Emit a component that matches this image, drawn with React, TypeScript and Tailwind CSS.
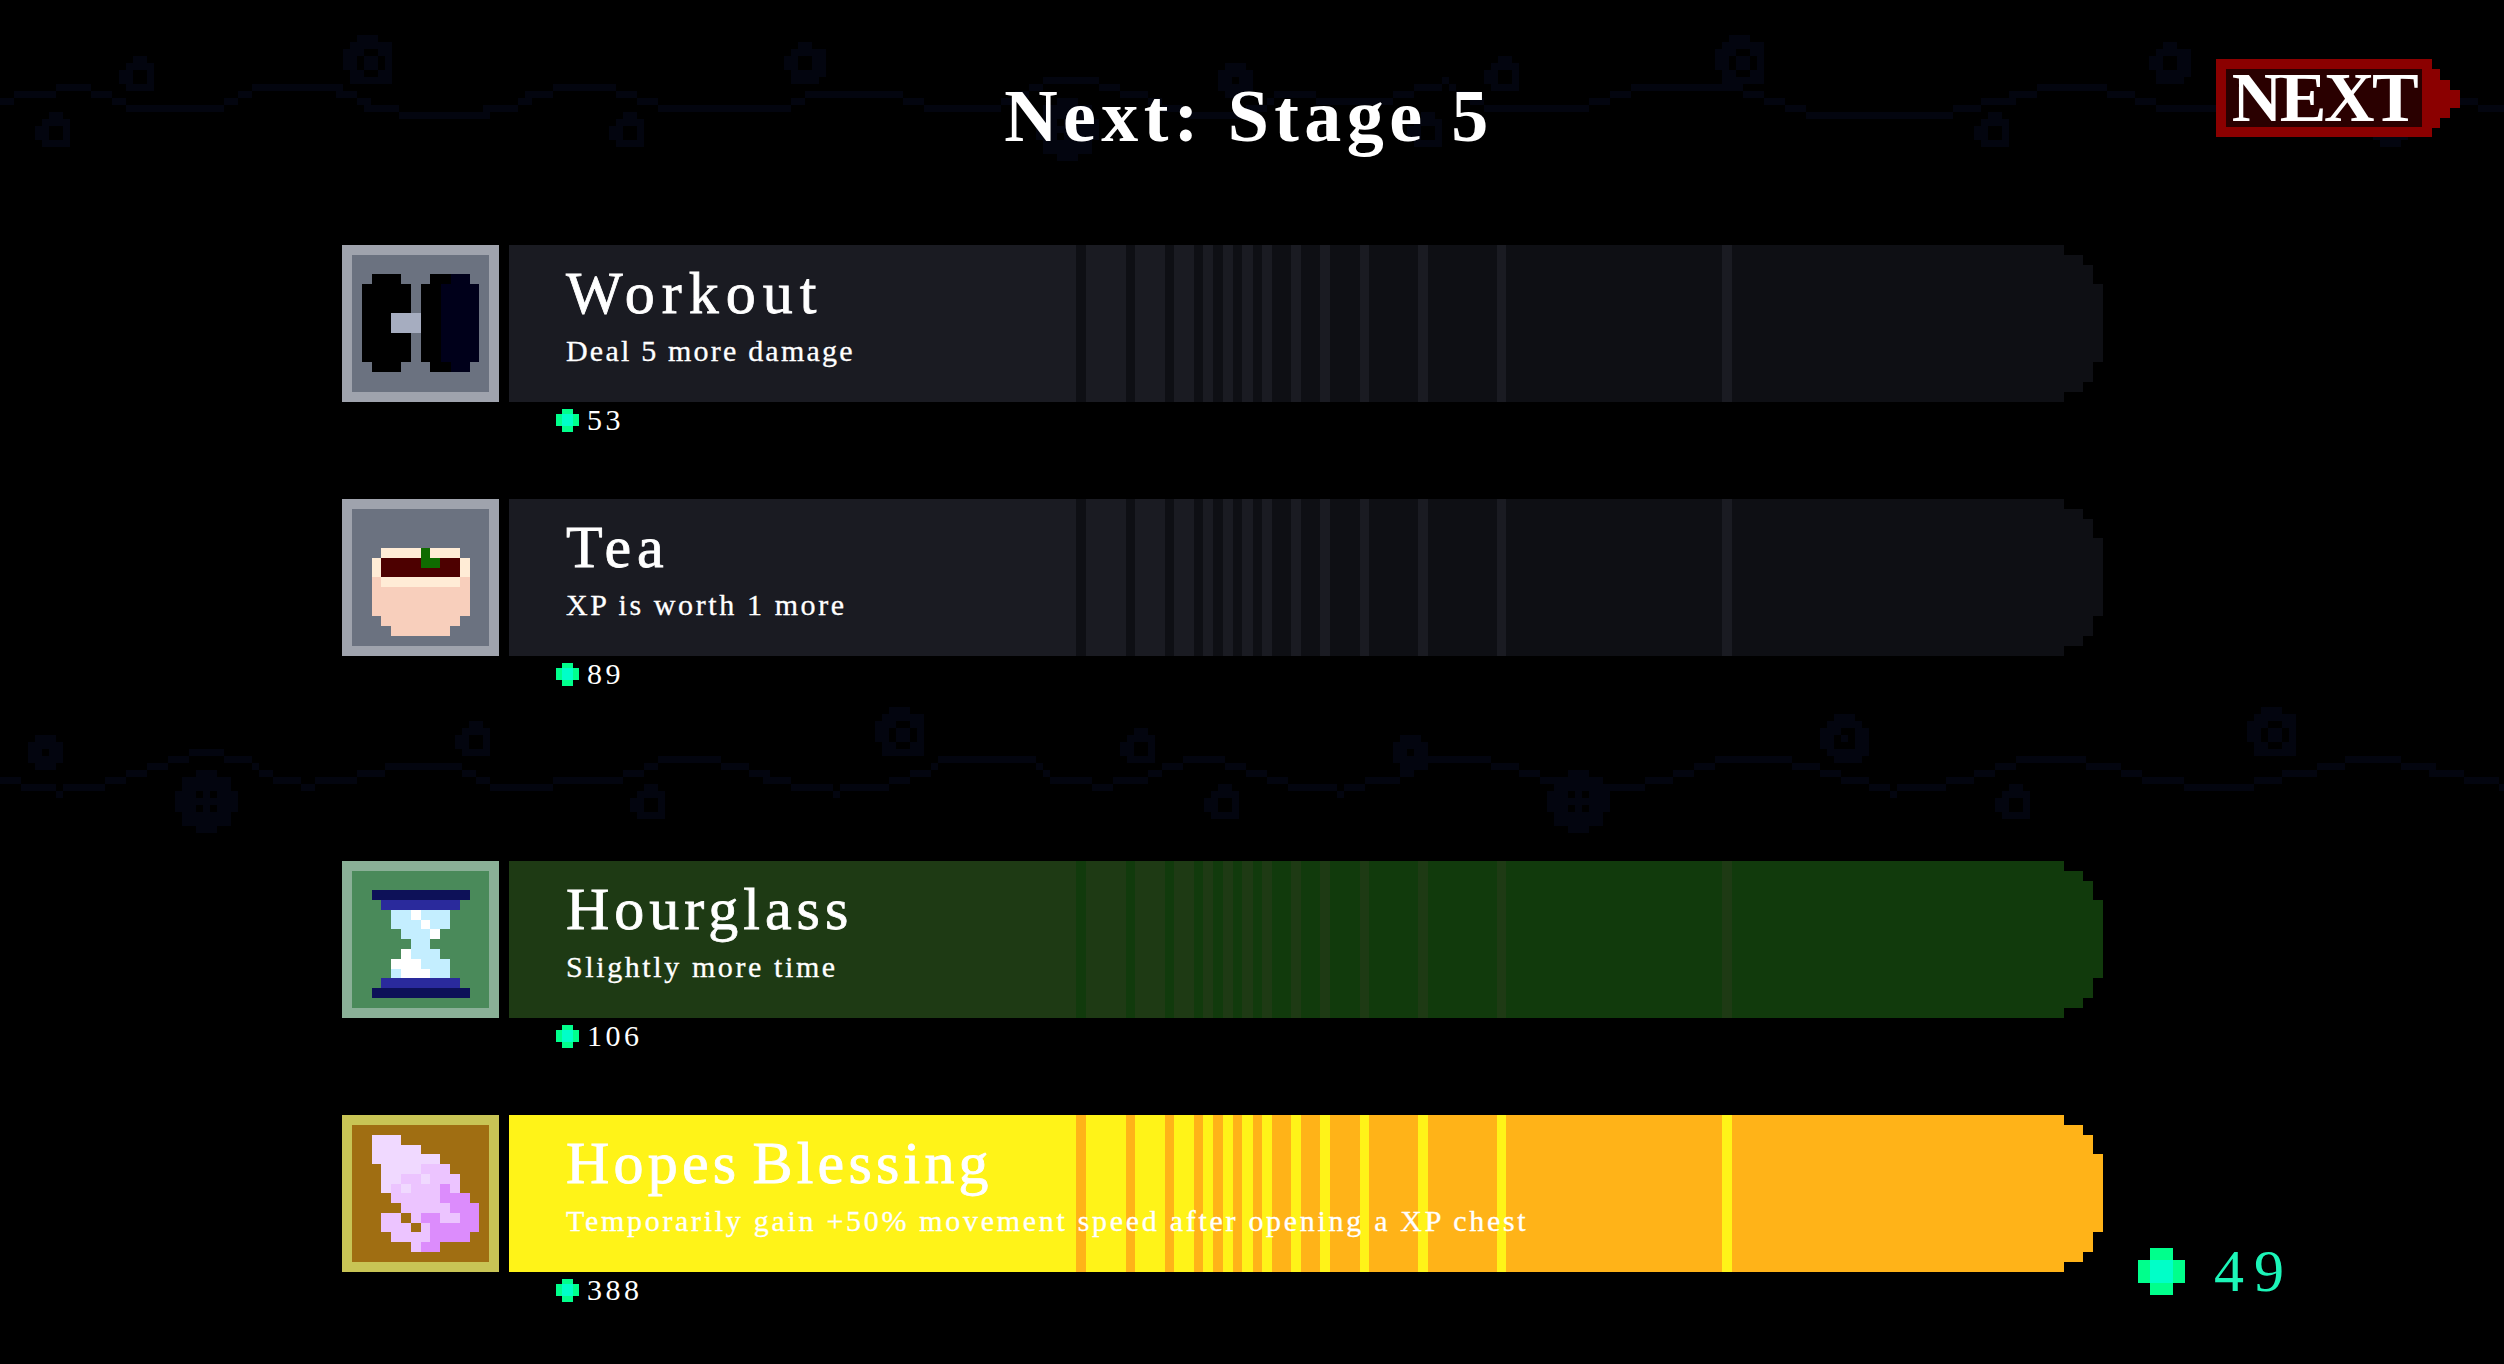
const serif = "font-['Liberation_Serif',serif]";

type Rect = [number, number, number, number, string];

// stripe boundaries measured from the left edge of a bar
const stripes: [number, number][] = [
  [567, 577], [617, 626], [656, 665], [685, 694], [704, 714], [724, 733], [744, 753],
  [763, 782], [792, 811], [821, 851], [860, 909], [919, 988], [997, 1213], [1223, 1594],
];

const workout: Rect[] = [
  [132, 132, 73, 30, "#000"], [106, 162, 124, 234, "#000"], [132, 396, 73, 30, "#000"],
  [278, 132, 101, 30, "#000"], [255, 162, 147, 234, "#000"], [278, 396, 101, 30, "#000"],
  [330, 132, 49, 30, "#00001a"], [305, 162, 97, 234, "#00001a"], [330, 396, 49, 30, "#00001a"],
  [180, 249, 75, 60, "#a6adc0"],
];

const tea: Rect[] = [
  [156, 261, 294, 117, "#f8cfbc"], [183, 378, 237, 30, "#f8cfbc"], [213, 408, 177, 30, "#f8cfbc"],
  [183, 174, 120, 30, "#ffecd6"], [330, 174, 90, 30, "#ffecd6"], [156, 204, 27, 57, "#ffecd6"],
  [420, 204, 30, 57, "#ffecd6"], [183, 261, 237, 30, "#ffecd6"], [183, 204, 237, 57, "#4d0000"],
  [303, 174, 27, 30, "#0f6b00"], [303, 204, 57, 30, "#0f6b00"],
];

const hourglass: Rect[] = [
  [156, 120, 294, 30, "#0d1158"], [156, 414, 294, 30, "#0d1158"],
  [183, 150, 237, 30, "#2a2a9c"], [183, 384, 237, 30, "#2a2a9c"],
  [213, 180, 177, 57, "#c4eeff"], [243, 237, 117, 30, "#c4eeff"], [273, 267, 57, 30, "#c4eeff"],
  [243, 297, 117, 30, "#c4eeff"], [213, 327, 177, 57, "#c4eeff"],
  [273, 180, 30, 30, "#fff"], [303, 210, 27, 27, "#fff"], [330, 237, 30, 30, "#fff"],
  [243, 297, 30, 30, "#fff"], [213, 327, 90, 30, "#fff"], [243, 357, 87, 27, "#fff"],
];

const L = "#f0d9ff";
const M = "#ecc4ff";
const D = "#dc8cfc";
const blessing: Rect[] = [
  [156, 90, 87, 30, L], [156, 120, 147, 27, L], [156, 147, 204, 30, L], [183, 177, 120, 30, L],
  [183, 207, 60, 30, L], [183, 237, 30, 27, L], [303, 207, 27, 30, L], [243, 237, 30, 27, L],
  [303, 177, 87, 30, M], [243, 207, 60, 30, M], [330, 207, 90, 30, M], [213, 237, 30, 27, M],
  [273, 237, 87, 27, M], [390, 237, 30, 27, M], [213, 264, 147, 30, M], [243, 294, 147, 30, M],
  [273, 324, 30, 30, M], [360, 324, 60, 30, M], [183, 324, 60, 57, M], [243, 354, 30, 27, M],
  [303, 354, 27, 27, M], [213, 381, 117, 30, M], [273, 411, 30, 30, M],
  [360, 237, 30, 27, D], [360, 264, 90, 30, D], [390, 294, 87, 30, D], [303, 324, 57, 30, D],
  [420, 324, 57, 30, D], [330, 354, 147, 27, D], [330, 381, 120, 30, D], [303, 411, 57, 30, D],
];

const PixelArt = ({ rects, box }: { rects: Rect[]; box: string }) => (
  <svg viewBox={box} preserveAspectRatio="none" shapeRendering="crispEdges" className="block w-[137px] h-[137px]">
    {rects.map(([x, y, w, h, c], i) => (
      <rect key={i} x={x} y={y} width={w} height={h} fill={c} />
    ))}
  </svg>
);

const Gem = ({ className }: { className: string }) => (
  <svg viewBox="0 0 8 8" shapeRendering="crispEdges" className={className}>
    <path d="M2 0h4v2h2v4H6v2H2V6H0V2h2z" fill="#00ff8c" />
    <rect x="2" y="2" width="4" height="4" fill="#00ffc8" />
  </svg>
);

// wave points in page pixels
const topWave: [number, number][] = [
  [0, 100], [15, 94], [46, 88], [70, 81], [89, 88], [107, 94], [126, 102], [138, 108], [208, 108],
  [217, 102], [236, 94], [251, 81], [328, 81], [337, 88], [352, 94], [367, 102], [389, 108],
  [416, 115], [468, 115], [484, 108], [508, 102], [527, 94], [545, 88], [588, 81], [615, 88],
  [631, 94], [658, 102], [683, 108], [778, 108], [787, 102], [808, 94], [857, 88], [897, 94],
  [922, 102], [949, 108], [992, 102], [1020, 88], [1053, 75], [1087, 75], [1120, 88], [1138, 94],
  [1174, 108], [1196, 115], [1228, 115], [1260, 102], [1281, 88], [1303, 88], [1324, 100],
  [1371, 100], [1406, 88], [1442, 80], [1478, 100], [1506, 108], [1560, 108], [1610, 94],
  [1650, 81], [1720, 81], [1760, 94], [1800, 108], [1880, 115], [1950, 108], [2010, 94],
  [2060, 81], [2110, 88], [2160, 102], [2210, 108], [2280, 108], [2330, 94], [2380, 81],
  [2440, 94], [2504, 108],
];

const midWave: [number, number][] = [
  [0, 775], [24, 782], [56, 788], [96, 782], [140, 767], [199, 747], [239, 755], [271, 774], [303, 782],
  [347, 774], [375, 767], [411, 760], [463, 767], [494, 782], [542, 782], [614, 774], [654, 760], [686, 753],
  [718, 760], [766, 774], [797, 782], [833, 788], [881, 782], [921, 767], [945, 753], [1025, 753], [1053, 774],
  [1100, 782], [1144, 774], [1196, 753], [1244, 767], [1290, 782], [1340, 788], [1390, 774], [1440, 753],
  [1490, 760], [1540, 775], [1590, 782], [1640, 782], [1690, 767], [1740, 753], [1790, 760], [1840, 774],
  [1890, 788], [1940, 782], [1990, 767], [2040, 753], [2090, 760], [2140, 774], [2190, 782], [2250, 782],
  [2310, 767], [2370, 753], [2430, 767], [2504, 782],
];

const G = 7;

const waveCells = (pts: [number, number][]) => {
  const cells = new Set<string>();
  for (let i = 0; i < pts.length - 1; i++) {
    const [x0, y0] = pts[i];
    const [x1, y1] = pts[i + 1];
    for (let x = x0; x < x1; x += G) {
      const y = y0 + ((y1 - y0) * (x - x0)) / (x1 - x0);
      cells.add(Math.round(x / G) * G + "," + Math.round(y / G) * G);
    }
  }
  return [...cells].map((c) => c.split(",").map(Number));
};

const ringCells = (cx: number, cy: number, r: number) => {
  const out: number[][] = [];
  for (let y = -r; y <= r; y += G) {
    for (let x = -r; x <= r; x += G) {
      const d = Math.hypot(x, y);
      const hole = r >= 22 ? d > r * 0.25 && d < r * 0.5 : d < r * 0.4;
      if (d <= r + 2 && !hole) {
        out.push([Math.round((cx + x) / G) * G, Math.round((cy + y) / G) * G]);
      }
    }
  }
  return out;
};

const rings: [number, number, number][] = [
  [133, 73, 17], [49, 128, 17], [370, 62, 24], [626, 128, 17], [800, 63, 19], [1065, 123, 28],
  [1231, 77, 14], [1424, 128, 17], [1503, 73, 17], [1741, 61, 24], [1993, 131, 17], [2169, 64, 19],
  [2390, 125, 14], [40, 750, 14], [472, 737, 17], [900, 733, 24], [1139, 747, 17], [1408, 750, 14],
  [1840, 735, 22], [2268, 731, 24], [204, 798, 28], [646, 802, 17], [1222, 802, 17], [1573, 795, 28],
  [2015, 802, 17],
];

const bgCells = [
  ...waveCells(topWave),
  ...waveCells(midWave),
  ...rings.flatMap(([x, y, r]) => ringCells(x, y, r)),
];

const Background = () => (
  <svg width="2504" height="1364" shapeRendering="crispEdges" className="absolute inset-0">
    {bgCells.map(([x, y], i) => (
      <rect key={i} x={x} y={y} width={G} height={G} fill="#03050f" />
    ))}
  </svg>
);

type Item = {
  name: string;
  desc: string;
  price: number;
  rects: Rect[];
  box: string;
  frame: string;
  bar: string;
  stripe: string;
  tracking: string;
  descTracking: string;
};

const items: Item[] = [
  { name: "Workout", desc: "Deal 5 more damage", price: 53, rects: workout, box: "81 75 346 411", frame: "border-[#9fa3ad] bg-[#6b7280]", bar: "bg-[#1a1b22]", stripe: "bg-[#0e0f14]", tracking: "tracking-[7px]", descTracking: "tracking-[2.2px]" },
  { name: "Tea", desc: "XP is worth 1 more", price: 89, rects: tea, box: "96 57 411 411", frame: "border-[#9fa3ad] bg-[#6b7280]", bar: "bg-[#1a1b22]", stripe: "bg-[#0e0f14]", tracking: "tracking-[6px]", descTracking: "tracking-[2.6px]" },
  { name: "Hourglass", desc: "Slightly more time", price: 106, rects: hourglass, box: "96 63 411 411", frame: "border-[#8ab097] bg-[#4a8a5a]", bar: "bg-[#1e3a14]", stripe: "bg-[#113a0c]", tracking: "tracking-[5px]", descTracking: "tracking-[2.6px]" },
  { name: "Hopes Blessing", desc: "Temporarily gain +50% movement speed after opening a XP chest", price: 388, rects: blessing, box: "96 60 411 411", frame: "border-[#c8c455] bg-[#a06e12]", bar: "bg-[#fff318]", stripe: "bg-[#ffb318]", tracking: "tracking-[4.2px] [word-spacing:-7px]", descTracking: "tracking-[2.7px]" },
];

const Row = ({ item }: { item: Item }) => (
  <div className="h-[254px]">
    <div className="flex gap-[10px]">
      <div className={`w-[157px] h-[157px] shrink-0 border-[10px] ${item.frame}`}>
        <PixelArt rects={item.rects} box={item.box} />
      </div>
      <div className={`relative w-[1594px] h-[157px] overflow-hidden ${item.bar} [clip-path:polygon(0_0,1555px_0,1555px_10px,1574px_10px,1574px_20px,1584px_20px,1584px_39px,1594px_39px,1594px_117px,1584px_117px,1584px_137px,1574px_137px,1574px_147px,1555px_147px,1555px_157px,0_157px)]`}>
        {stripes.map(([a, b]) => (
          <div key={a} className={`absolute top-0 bottom-0 ${item.stripe}`} style={{ left: a, width: b - a }} />
        ))}
        <div className="relative pl-[57px] pt-[10px] text-white">
          <div className={`${serif} text-[60px] leading-[76px] [-webkit-text-stroke:0.8px_#fff] ${item.tracking}`}>{item.name}</div>
          <div className={`${serif} text-[30px] leading-[40px] [-webkit-text-stroke:0.3px_#fff] ${item.descTracking}`}>{item.desc}</div>
        </div>
      </div>
    </div>
    <div className="flex items-center gap-[8px] ml-[214px] mt-[6px]">
      <Gem className="w-[23px] h-[24px]" />
      <span className={`${serif} text-[30px] leading-[24px] tracking-[3.5px] text-white`}>{item.price}</span>
    </div>
  </div>
);

export default function App() {
  return (
    <div className="relative w-[2504px] h-[1364px] bg-black overflow-hidden">
      <Background />
      <div className="relative">
        <div className="h-[245px] pt-[74px] pr-[6px] text-center">
          <h1 className={`${serif} text-[74px] leading-[84px] font-bold tracking-[5.4px] text-white`}>Next: Stage 5</h1>
        </div>
        <div className="pl-[342px]">
          <Row item={items[0]} />
          <Row item={items[1]} />
          <div className="h-[108px]" />
          <Row item={items[2]} />
          <Row item={items[3]} />
        </div>
      </div>

      <div className="absolute left-[2216px] top-[59px] w-[244px] h-[78px] p-[10px] bg-[#8b0000] [clip-path:polygon(0_0,216px_0,216px_10px,224px_10px,224px_21px,234px_21px,234px_31px,244px_31px,244px_49px,234px_49px,234px_59px,224px_59px,224px_69px,216px_69px,216px_78px,0_78px)]">
        <div className="w-[196px] h-[58px] bg-[#2a0000] flex items-center justify-center">
          <span className={`${serif} text-[70px] leading-[58px] font-bold tracking-[-2.5px] text-white`}>NEXT</span>
        </div>
      </div>

      <div className="absolute left-[2138px] top-[1248px] flex items-center gap-[29px]">
        <Gem className="w-[47px] h-[47px]" />
        <span className={`${serif} text-[60px] leading-[47px] tracking-[10px] text-[#1cf5b8]`}>49</span>
      </div>
    </div>
  );
}
